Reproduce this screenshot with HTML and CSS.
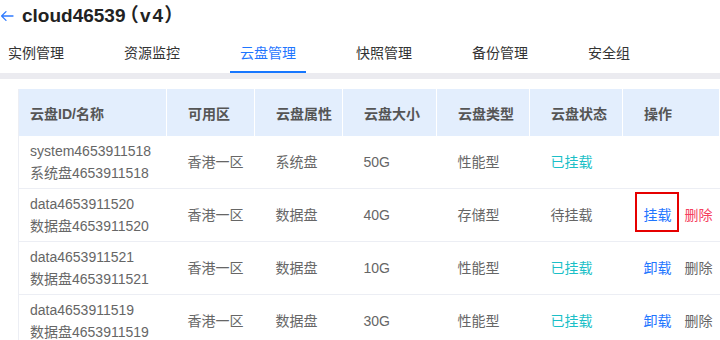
FILE: index.html
```html
<!DOCTYPE html>
<html lang="zh-CN">
<head>
<meta charset="utf-8">
<title>cloud46539（v4）</title>
<link rel="stylesheet" href="styles.css">
</head>
<body>
<header class="title-bar">
  <svg class="back" width="14" height="12" viewBox="0 0 14 12" aria-hidden="true">
    <path d="M13 6 H1.6 M6 1.6 L1.6 6 L6 10.4" fill="none" stroke="#2f7bff" stroke-width="1.3" stroke-linecap="round" stroke-linejoin="round"/>
  </svg>
  <h1 class="title">cloud46539<span class="ver">（v4）</span></h1>
</header>
<nav class="tabs">
  <a class="tab">实例管理</a>
  <a class="tab">资源监控</a>
  <a class="tab active">云盘管理</a>
  <a class="tab">快照管理</a>
  <a class="tab">备份管理</a>
  <a class="tab">安全组</a>
</nav>
<div class="band"></div>
<main class="content">
  <table class="disk-table">
    <colgroup>
      <col class="c1"><col class="c2"><col class="c3"><col class="c4"><col class="c5"><col class="c6"><col class="c7">
    </colgroup>
    <thead>
      <tr>
        <th>云盘ID/名称</th><th>可用区</th><th>云盘属性</th><th>云盘大小</th><th>云盘类型</th><th>云盘状态</th><th>操作</th>
      </tr>
    </thead>
    <tbody>
      <tr>
        <td><div>system4653911518</div><div>系统盘4653911518</div></td>
        <td>香港一区</td><td>系统盘</td><td>50G</td><td>性能型</td>
        <td class="ok">已挂载</td>
        <td></td>
      </tr>
      <tr>
        <td><div>data4653911520</div><div>数据盘4653911520</div></td>
        <td>香港一区</td><td>数据盘</td><td>40G</td><td>存储型</td>
        <td>待挂载</td>
        <td><a class="act blue marked">挂载</a><a class="act red">删除</a></td>
      </tr>
      <tr>
        <td><div>data4653911521</div><div>数据盘4653911521</div></td>
        <td>香港一区</td><td>数据盘</td><td>10G</td><td>性能型</td>
        <td class="ok">已挂载</td>
        <td><a class="act blue">卸载</a><a class="act">删除</a></td>
      </tr>
      <tr>
        <td><div>data4653911519</div><div>数据盘4653911519</div></td>
        <td>香港一区</td><td>数据盘</td><td>30G</td><td>性能型</td>
        <td class="ok">已挂载</td>
        <td><a class="act blue">卸载</a><a class="act">删除</a></td>
      </tr>
    </tbody>
  </table>
</main>
</body>
</html>
```
FILE: styles.css
```css
html, body {
  margin: 0;
  padding: 0;
  background: #fff;
  overflow: hidden;
}
body {
  font-family: "Liberation Sans", "Noto Sans CJK SC", sans-serif;
  font-size: 14px;
  color: #333;
}
.title-bar {
  display: flex;
  align-items: center;
  height: 32px;
}
.back {
  display: block;
  margin-right: 8px;
}
.title {
  margin: 0;
  font-size: 19px;
  line-height: 32px;
  font-weight: bold;
  color: #222;
  font-feature-settings: "palt";
}
.ver {
  margin-left: 3px;
  letter-spacing: 2px;
}
.tabs {
  display: flex;
  gap: 40px;
  height: 41px;
  margin-left: -2px;
}
.tab {
  padding: 3px 10px 0;
  line-height: 36px;
  border-bottom: 2px solid transparent;
  color: #333;
  white-space: nowrap;
}
.tab.active {
  color: #1f76ff;
  border-bottom-color: #1677ff;
}
.band {
  height: 6px;
  background: #ebebf0;
}
.content {
  padding: 10px 0 0 18px;
}
.disk-table {
  width: 702px;
  table-layout: fixed;
  border-collapse: collapse;
  border-left: 1px solid #eceef4;
}
.c1 { width: 148px; }
.c2 { width: 88px; }
.c3 { width: 88px; }
.c4 { width: 94px; }
.c5 { width: 93px; }
.c6 { width: 93px; }
.disk-table th {
  height: 47px;
  padding: 0 0 0 21px;
  background: #e3eefd;
  border-right: 1px solid #fff;
  text-align: left;
  font-weight: bold;
  color: #555;
}
.disk-table th:first-child,
.disk-table td:first-child {
  padding-left: 11px;
}
.disk-table td {
  padding: 4px 0 4px 21px;
  line-height: 22px;
  color: #666;
  border-bottom: 1px solid #eceef4;
  vertical-align: middle;
  white-space: nowrap;
}
.disk-table td.ok {
  color: #1bbfc7;
}
.act {
  position: relative;
  display: inline-block;
  color: #666;
  margin-right: 13px;
}
.act.blue { color: #1f76ff; }
.act.red { color: #f5405e; }
.act.marked::after {
  content: "";
  position: absolute;
  left: -9px;
  right: -7px;
  top: -12px;
  bottom: -6px;
  border: 2px solid #e60000;
}
```
